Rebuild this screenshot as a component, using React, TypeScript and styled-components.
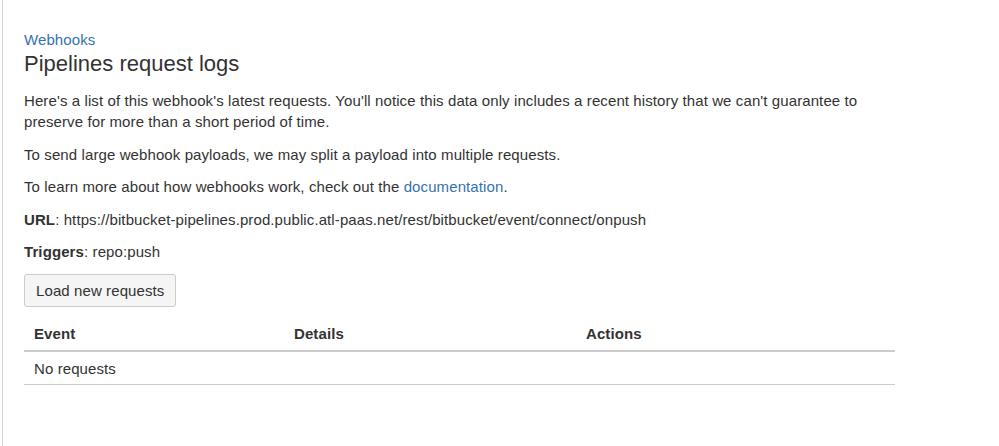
import React from "react";
import styled, { createGlobalStyle } from "styled-components";

const GlobalStyle = createGlobalStyle`
  html, body { margin: 0; padding: 0; background: #fff; }
  body {
    font-family: "Liberation Sans", Arial, Helvetica, sans-serif;
    font-size: 15px;
    line-height: 21px;
    letter-spacing: 0.1px;
    color: #333;
  }
`;

const Page = styled.div`
  margin-left: 2px;
  min-height: 446px;
  box-sizing: border-box;
  border-left: 1px solid #d4d4d4;
  padding: 30px 0 0 21px;
`;

const Breadcrumb = styled.a`
  display: block;
  color: #3572b0;
  text-decoration: none;
  font-size: 15px;
  line-height: 20px;
`;

const Title = styled.h1`
  margin: 2px 0 0;
  font-size: 22px;
  line-height: 24px;
  font-weight: normal;
  letter-spacing: 0;
  color: #333;
`;

const Para = styled.p<{ $first?: boolean }>`
  margin: ${(p) => (p.$first ? "14px" : "11.5px")} 0 0;
  width: 871px;
`;

const Link = styled.a`
  color: #3572b0;
  text-decoration: none;
`;

const Label = styled.strong`
  font-weight: bold;
`;

const Button = styled.button`
  margin-top: 12px;
  font-family: inherit;
  font-size: 15px;
  line-height: 21px;
  letter-spacing: 0.1px;
  color: #333;
  background: #f5f5f5;
  border: 1px solid #ccc;
  border-radius: 3px;
  padding: 5px 11px;
  cursor: pointer;
`;

const Table = styled.table`
  margin-top: 8px;
  width: 871px;
  border-collapse: collapse;
  table-layout: fixed;
`;

const HeadCell = styled.th<{ $w: number }>`
  width: ${(p) => p.$w}px;
  text-align: left;
  font-weight: bold;
  padding: 8px 10px 6px;
  border-bottom: 2px solid #ccc;
`;

const Cell = styled.td`
  padding: 5.5px 10px;
  border-bottom: 1px solid #ccc;
`;

export default function App() {
  return (
    <>
      <GlobalStyle />
      <Page>
        <Breadcrumb href="#">Webhooks</Breadcrumb>
        <Title>Pipelines request logs</Title>
        <Para $first>
          Here's a list of this webhook's latest requests. You'll notice this data only includes a
          recent history that we can't guarantee to preserve for more than a short period of time.
        </Para>
        <Para>To send large webhook payloads, we may split a payload into multiple requests.</Para>
        <Para>
          To learn more about how webhooks work, check out the <Link href="#">documentation</Link>.
        </Para>
        <Para>
          <Label>URL</Label>: https://bitbucket-pipelines.prod.public.atl-paas.net/rest/bitbucket/event/connect/onpush
        </Para>
        <Para>
          <Label>Triggers</Label>: repo:push
        </Para>
        <Button>Load new requests</Button>
        <Table>
          <thead>
            <tr>
              <HeadCell $w={240}>Event</HeadCell>
              <HeadCell $w={272}>Details</HeadCell>
              <HeadCell $w={299}>Actions</HeadCell>
            </tr>
          </thead>
          <tbody>
            <tr>
              <Cell colSpan={3}>No requests</Cell>
            </tr>
          </tbody>
        </Table>
      </Page>
    </>
  );
}
